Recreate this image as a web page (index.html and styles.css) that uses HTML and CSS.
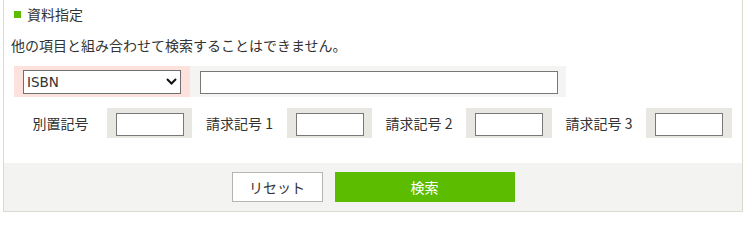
FILE: index.html
```html
<!DOCTYPE html>
<html lang="ja">
<head>
<meta charset="utf-8">
<title>資料指定</title>
<link rel="stylesheet" href="styles.css">
</head>
<body>
<div class="panel">
  <div class="panel-body">
    <div class="heading"><span class="bullet"></span><span>資料指定</span></div>
    <p class="note">他の項目と組み合わせて検索することはできません。</p>
    <div class="row row-main">
      <div class="cell cell-select">
        <div class="select-wrap">
          <select class="select">
            <option>ISBN</option>
          </select>
          <svg class="chevron" width="11" height="7" viewBox="0 0 11 7"><path d="M1 1 L5.5 5.5 L10 1" fill="none" stroke="#111" stroke-width="2"/></svg>
        </div>
      </div>
      <div class="cell cell-text"><input class="text-input wide" type="text"></div>
    </div>
    <div class="row row-codes">
      <div class="label w93">別置記号</div>
      <div class="cell cell-code w85"><input class="text-input code" type="text"></div>
      <div class="label w95">請求記号 1</div>
      <div class="cell cell-code w85"><input class="text-input code" type="text"></div>
      <div class="label w94">請求記号 2</div>
      <div class="cell cell-code w86"><input class="text-input code" type="text"></div>
      <div class="label w94">請求記号 3</div>
      <div class="cell cell-code w86"><input class="text-input code" type="text"></div>
    </div>
  </div>
  <div class="footer">
    <button class="btn btn-reset" type="button">リセット</button>
    <button class="btn btn-search" type="button">検索</button>
  </div>
</div>
</body>
</html>
```

FILE: styles.css
```css
html, body {
  margin: 0;
  padding: 0;
  background: #ffffff;
}
body {
  font-family: "DejaVu Sans", "Noto Sans CJK JP", sans-serif;
  font-size: 14px;
  color: #333333;
}
.panel {
  margin-left: 3px;
  width: 740px;
  box-sizing: border-box;
  border-left: 1px solid #dcd9ce;
  border-right: 1px solid #dcd9ce;
  border-bottom: 1px solid #dcd9ce;
}
.panel-body {
  padding: 4px 0 25px 0;
}
.heading {
  display: flex;
  align-items: center;
  height: 20px;
  line-height: 20px;
  padding-left: 10px;
  font-family: "Noto Sans CJK JP", sans-serif;
  font-size: 14px;
}
.bullet {
  width: 7px;
  height: 7px;
  background: #5cbc00;
  margin-right: 6px;
}
.note {
  margin: 11px 0 0 7px;
  height: 20px;
  line-height: 20px;
  font-family: "Noto Sans CJK JP", sans-serif;
  font-size: 14px;
}
.row {
  display: flex;
  margin-left: 10px;
}
.row-main {
  margin-top: 11px;
  height: 31px;
}
.row-codes {
  margin-top: 11px;
  height: 30px;
}
.cell {
  box-sizing: border-box;
  height: 100%;
}
.cell-select {
  width: 176px;
  background: #fce1dc;
  padding: 4px 0 0 9px;
}
.cell-text {
  width: 376px;
  background: #f4f4f2;
  padding: 5px 0 0 10px;
}
.select-wrap {
  position: relative;
  width: 158px;
  height: 24px;
}
.select {
  appearance: none;
  -webkit-appearance: none;
  width: 158px;
  height: 24px;
  box-sizing: border-box;
  border: 1px solid #6f6f6f;
  border-radius: 0;
  background: #ffffff;
  font-family: "DejaVu Sans", "Noto Sans CJK JP", sans-serif;
  font-size: 13.5px;
  color: #333333;
  padding: 0 0 0 3px;
  margin: 0;
}
.chevron {
  position: absolute;
  left: 143px;
  top: 8px;
  pointer-events: none;
}
.text-input {
  box-sizing: border-box;
  height: 23px;
  border: 1px solid #787878;
  border-radius: 0;
  background: #ffffff;
  margin: 0;
  padding: 0 3px;
  font-size: 14px;
}
.wide {
  width: 358px;
}
.code {
  width: 68px;
}
.label {
  height: 100%;
  display: flex;
  align-items: center;
  justify-content: center;
  font-family: "Noto Sans CJK JP", sans-serif;
  font-size: 14px;
  line-height: 20px;
}
.cell-code {
  background: #e8e7e2;
  padding: 5px 0 0 9px;
}
.w93 { width: 93px; }
.w94 { width: 94px; }
.w95 { width: 95px; }
.w85 { width: 85px; }
.w86 { width: 86px; }
.footer {
  height: 48px;
  background: #f3f3f1;
  display: flex;
  align-items: center;
  justify-content: center;
  gap: 12px;
}
.btn {
  height: 30px;
  box-sizing: border-box;
  margin: 0;
  padding: 0;
  font-family: "Noto Sans CJK JP", sans-serif;
  font-size: 14px;
  border-radius: 0;
  cursor: pointer;
}
.btn-reset {
  width: 91px;
  background: #ffffff;
  border: 1px solid #b4b4b4;
  color: #333333;
}
.btn-search {
  width: 180px;
  background: #5cbd00;
  border: none;
  color: #ffffff;
}
```
